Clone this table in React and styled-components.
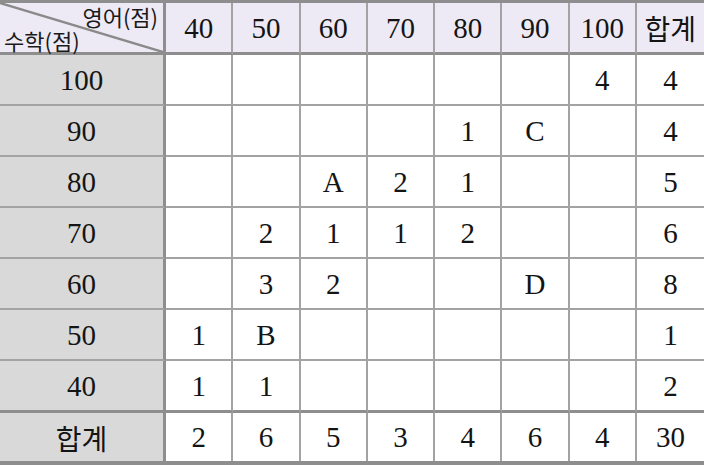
import React from "react";
import styled, { createGlobalStyle } from "styled-components";

const GlobalStyle = createGlobalStyle`
  html, body {
    margin: 0;
    padding: 0;
    background: #ffffff;
  }
`;

const english = ["40", "50", "60", "70", "80", "90", "100"];

const rows = [
  { math: "100", cells: ["", "", "", "", "", "", "4"], total: "4" },
  { math: "90", cells: ["", "", "", "", "1", "C", ""], total: "4" },
  { math: "80", cells: ["", "", "A", "2", "1", "", ""], total: "5" },
  { math: "70", cells: ["", "2", "1", "1", "2", "", ""], total: "6" },
  { math: "60", cells: ["", "3", "2", "", "", "D", ""], total: "8" },
  { math: "50", cells: ["1", "B", "", "", "", "", ""], total: "1" },
  { math: "40", cells: ["1", "1", "", "", "", "", ""], total: "2" },
];

const totals = ["2", "6", "5", "3", "4", "6", "4", "30"];

const App = () => {
  return (
    <>
      <GlobalStyle />
      <Table>
        <Corner>
          <Diagonal viewBox="0 0 163 49" preserveAspectRatio="none">
            <line x1="0" y1="0" x2="163" y2="49" stroke="#8a8a8a" strokeWidth="2.4" />
          </Diagonal>
          <CornerTop>영어(점)</CornerTop>
          <CornerBottom>수학(점)</CornerBottom>
        </Corner>
        {english.map((e) => (
          <HeadCell key={e}>{e}</HeadCell>
        ))}
        <HeadCell $korean $last>합계</HeadCell>

        {rows.map((row, i) => (
          <React.Fragment key={row.math}>
            <SideCell $thick={i === rows.length - 1}>{row.math}</SideCell>
            {row.cells.map((c, j) => (
              <Cell key={j} $thick={i === rows.length - 1}>{c}</Cell>
            ))}
            <Cell $thick={i === rows.length - 1} $last>{row.total}</Cell>
          </React.Fragment>
        ))}

        <SideCell $korean $foot>합계</SideCell>
        {totals.map((t, j) => (
          <Cell key={j} $foot $last={j === totals.length - 1}>{t}</Cell>
        ))}
      </Table>
    </>
  );
};

export default App;

const Table = styled.div`
  display: grid;
  grid-template-columns: 166px repeat(8, 1fr);
  grid-template-rows: 52px repeat(6, 51px) 52px 48px;
  width: 704px;
  border-top: 3px solid #8e8e8e;
  border-bottom: 4px solid #8e8e8e;
  color: #141414;
`;

const BaseCell = styled.div`
  box-sizing: border-box;
  display: flex;
  align-items: center;
  justify-content: center;
  font-family: ${(p) =>
    p.$korean
      ? `"Noto Sans CJK KR", "Noto Sans", sans-serif`
      : `"Liberation Serif", "Times New Roman", serif`};
  font-size: ${(p) => (p.$korean ? "28px" : "29px")};
  padding-top: 1px;
`;

const HeadCell = styled(BaseCell)`
  background: #eeeaf5;
  border-bottom: 3px solid #8e8e8e;
  border-right: ${(p) => (p.$last ? "none" : "2px solid #a3a3a3")};
`;

const Corner = styled.div`
  position: relative;
  box-sizing: border-box;
  background: #eeeaf5;
  border-bottom: 3px solid #8e8e8e;
  border-right: 3px solid #8e8e8e;
  display: flex;
  flex-direction: column;
  justify-content: space-between;
  padding: 1px 5px 0 4px;
  font-family: "Noto Sans CJK KR", "Noto Sans", sans-serif;
  font-size: 22px;
  line-height: 24px;
  color: #1a1a1a;
`;

const Diagonal = styled.svg`
  position: absolute;
  left: 0;
  top: 0;
  width: 163px;
  height: 49px;
`;

const CornerTop = styled.span`
  position: relative;
  align-self: flex-end;
`;

const CornerBottom = styled.span`
  position: relative;
  align-self: flex-start;
`;

const SideCell = styled(BaseCell)`
  background: #d9d9d9;
  border-right: 3px solid #8e8e8e;
  border-bottom: ${(p) =>
    p.$foot ? "none" : p.$thick ? "3px solid #8e8e8e" : "2px solid #a3a3a3"};
`;

const Cell = styled(BaseCell)`
  background: #ffffff;
  border-right: ${(p) => (p.$last ? "none" : "2px solid #a3a3a3")};
  border-bottom: ${(p) =>
    p.$foot ? "none" : p.$thick ? "3px solid #8e8e8e" : "2px solid #a3a3a3"};
`;
